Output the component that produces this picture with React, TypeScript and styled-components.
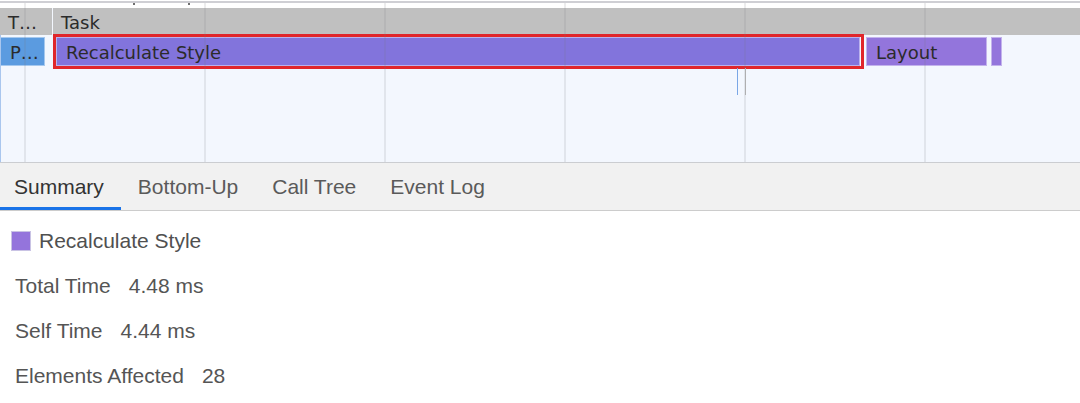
import React from "react";
import styled, { createGlobalStyle } from "styled-components";

type Bar = {
  label: string;
  left: number;
  width: number;
  kind: "task" | "parse" | "style" | "layout";
};

const taskRow: Bar[] = [
  { label: "T…", left: 0, width: 52, kind: "task" },
  { label: "Task", left: 53, width: 1027, kind: "task" },
];

const eventRow: Bar[] = [
  { label: "P…", left: 0, width: 45, kind: "parse" },
  { label: "Recalculate Style", left: 56, width: 804, kind: "style" },
  { label: "Layout", left: 866, width: 121, kind: "layout" },
  { label: "", left: 991, width: 10, kind: "layout" },
];

const gridLines = [24, 204, 384, 564, 744, 924];

const tabs = ["Summary", "Bottom-Up", "Call Tree", "Event Log"];

const details = [
  { label: "Total Time", value: "4.48 ms" },
  { label: "Self Time", value: "4.44 ms" },
  { label: "Elements Affected", value: "28" },
];

const App = () => {
  return (
    <Page>
      <GlobalStyle />
      <FlameChart>
        <Ruler>
          <Tick style={{ left: 133 }} />
          <Tick style={{ left: 188 }} />
        </Ruler>
        <Track $height={27}>
          {taskRow.map((b) => (
            <Block key={b.label} $kind={b.kind} style={{ left: b.left, width: b.width }}>
              {b.label}
            </Block>
          ))}
        </Track>
        <Track $height={29} $top={2}>
          {eventRow.map((b, i) => (
            <Block key={i} $kind={b.kind} style={{ left: b.left, width: b.width }}>
              {b.label}
            </Block>
          ))}
          <Selection style={{ left: 53, width: 811 }} />
        </Track>
        <Marker $color="#7aa7e6" style={{ left: 737 }} />
        <Marker $color="#b8b8b8" style={{ left: 745 }} />
        {gridLines.map((x) => (
          <GridLine key={x} style={{ left: x }} />
        ))}
        <LeftEdge />
      </FlameChart>
      <TabBar>
        {tabs.map((t, i) => (
          <Tab key={t} $active={i === 0}>
            {t}
          </Tab>
        ))}
      </TabBar>
      <Summary>
        <TitleRow>
          <Swatch />
          Recalculate Style
        </TitleRow>
        {details.map((d) => (
          <DetailRow key={d.label}>
            <span>{d.label}</span>
            <span>{d.value}</span>
          </DetailRow>
        ))}
      </Summary>
    </Page>
  );
};

export default App;

const GlobalStyle = createGlobalStyle`
  html, body {
    margin: 0;
    padding: 0;
    background: #ffffff;
  }
  body {
    font-family: "Liberation Sans", Arial, sans-serif;
  }
`;

const Page = styled.div`
  width: 1080px;
  height: 403px;
  display: flex;
  flex-direction: column;
  overflow: hidden;
  background: #ffffff;
`;

const FlameChart = styled.div`
  position: relative;
  height: 163px;
  flex-shrink: 0;
  background: #f3f7fe;
  border-bottom: 1px solid #cbcdd1;
  padding-top: 8px;
  box-sizing: border-box;
  overflow: hidden;
`;

const Ruler = styled.div`
  position: absolute;
  top: 0;
  left: 0;
  right: 0;
  height: 8px;
  background: #ffffff;

  &::before {
    content: "";
    position: absolute;
    left: 0;
    right: 0;
    top: 1px;
    height: 2px;
    background: #cfcfd4;
  }
`;

const Tick = styled.div`
  position: absolute;
  top: 3px;
  width: 2px;
  height: 2px;
  background: #6f6f6f;
`;

const Track = styled.div<{ $height: number; $top?: number }>`
  position: relative;
  height: ${({ $height }) => $height}px;
  margin-top: ${({ $top }) => $top ?? 0}px;
`;

const blockColors: Record<Bar["kind"], string> = {
  task: "#c0c0c0",
  parse: "#5b9be0",
  style: "#8274dc",
  layout: "#9375dc",
};

const Block = styled.div<{ $kind: Bar["kind"] }>`
  position: absolute;
  top: 0;
  bottom: 0;
  box-sizing: border-box;
  background: ${({ $kind }) => blockColors[$kind]};
  border: ${({ $kind }) => ($kind === "task" ? "none" : "1px solid rgba(255,255,255,0.45)")};
  padding-left: ${({ $kind }) => ($kind === "task" ? 8 : 9)}px;
  padding-top: 2px;
  font-family: "DejaVu Sans", "Liberation Sans", sans-serif;
  font-size: 18px;
  line-height: 26px;
  color: #2b2b2b;
  white-space: nowrap;
  overflow: hidden;
`;

const Selection = styled.div`
  position: absolute;
  top: -3px;
  bottom: -3px;
  border: 3px solid #e0262b;
  box-sizing: border-box;
  pointer-events: none;
`;

const Marker = styled.div<{ $color: string }>`
  position: absolute;
  top: 68px;
  height: 27px;
  width: 1px;
  background: ${({ $color }) => $color};
`;

const GridLine = styled.div`
  position: absolute;
  top: 3px;
  bottom: 0;
  width: 2px;
  background: rgba(120, 120, 130, 0.14);
`;

const LeftEdge = styled.div`
  position: absolute;
  left: 0;
  top: 35px;
  bottom: 0;
  width: 1px;
  background: #a9c6ee;
`;

const TabBar = styled.div`
  display: flex;
  height: 48px;
  flex-shrink: 0;
  background: #f1f1f1;
  border-bottom: 1px solid #cccccc;
  box-sizing: border-box;
  margin-left: -3px;
`;

const Tab = styled.div<{ $active: boolean }>`
  display: flex;
  align-items: center;
  padding: 3px 17px 0;
  font-size: 21px;
  color: ${({ $active }) => ($active ? "#333333" : "#5a5a5a")};
  border-bottom: 3px solid ${({ $active }) => ($active ? "#1a73e8" : "transparent")};
`;

const Summary = styled.div`
  display: flex;
  flex-direction: column;
  padding-top: 7px;
  color: #555555;
  font-size: 21px;
`;

const TitleRow = styled.div`
  display: flex;
  align-items: center;
  gap: 8px;
  height: 45px;
  padding-left: 11px;
  color: #505050;
`;

const Swatch = styled.span`
  width: 20px;
  height: 20px;
  box-sizing: border-box;
  background: #9474dc;
  border: 1px solid #c9c3e4;
`;

const DetailRow = styled.div`
  display: flex;
  align-items: center;
  gap: 18px;
  height: 45px;
  padding-left: 15px;
`;
